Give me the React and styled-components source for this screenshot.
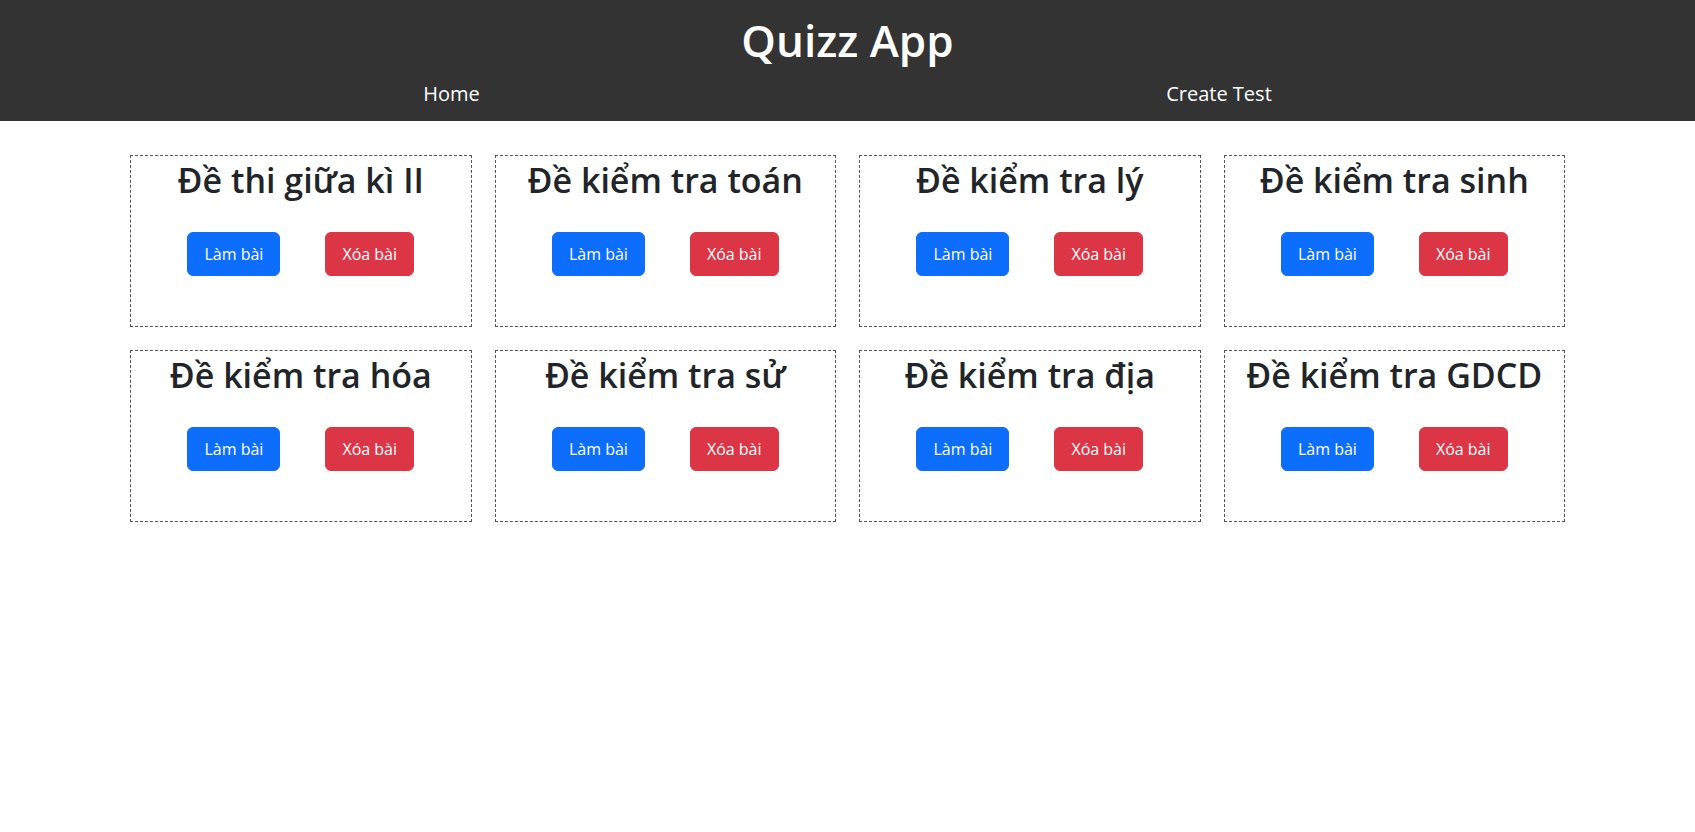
import React from 'react';
import styled, { createGlobalStyle } from 'styled-components';

const GlobalStyle = createGlobalStyle`
  body {
    margin: 0;
    background: #fff;
    font-family: "Open Sans", "Noto Sans", sans-serif;
    color: #212529;
  }
`;

const tests = [
  'Đề thi giữa kì II',
  'Đề kiểm tra toán',
  'Đề kiểm tra lý',
  'Đề kiểm tra sinh',
  'Đề kiểm tra hóa',
  'Đề kiểm tra sử',
  'Đề kiểm tra địa',
  'Đề kiểm tra GDCD',
];

const Header = styled.header`
  background-color: #333;
  color: #fff;
  height: 121px;
  box-sizing: border-box;
  padding-top: 14px;
  text-align: center;
`;

const Brand = styled.h1`
  margin: 0;
  font-size: 44px;
  font-weight: 600;
  line-height: 52px;
`;

const Nav = styled.ul`
  display: flex;
  justify-content: space-around;
  list-style: none;
  margin: 8px 0 0;
  padding: 0 80px;
`;

const NavLink = styled.a`
  color: #fff;
  text-decoration: none;
  font-size: 20px;
  line-height: 40px;
`;

const Grid = styled.main`
  width: 1435px;
  margin: 34px auto 0;
  display: grid;
  grid-template-columns: repeat(4, 1fr);
  gap: 23px;
`;

const Card = styled.div`
  height: 172px;
  box-sizing: border-box;
  border: 1px dashed #555;
  padding-top: 4px;
  text-align: center;
`;

const CardTitle = styled.h2`
  margin: 0;
  font-size: 34px;
  font-weight: 600;
  line-height: 40px;
  color: #212529;
`;

const Actions = styled.div`
  display: flex;
  justify-content: center;
  gap: 45px;
  margin-top: 32px;
`;

const Button = styled.button`
  font-family: inherit;
  font-size: 16px;
  line-height: 24px;
  padding: 9px 16px;
  border-radius: 6px;
  border: 1px solid ${props => (props.danger ? '#dc3545' : '#0d6efd')};
  background-color: ${props => (props.danger ? '#dc3545' : '#0d6efd')};
  color: #fff;
  cursor: pointer;
`;

export default function App() {
  return (
    <>
      <GlobalStyle />
      <Header>
        <Brand>Quizz App</Brand>
        <Nav>
          <li><NavLink href="#">Home</NavLink></li>
          <li><NavLink href="#">Create Test</NavLink></li>
        </Nav>
      </Header>
      <Grid>
        {tests.map(name => (
          <Card key={name}>
            <CardTitle>{name}</CardTitle>
            <Actions>
              <Button>Làm bài</Button>
              <Button danger>Xóa bài</Button>
            </Actions>
          </Card>
        ))}
      </Grid>
    </>
  );
}
